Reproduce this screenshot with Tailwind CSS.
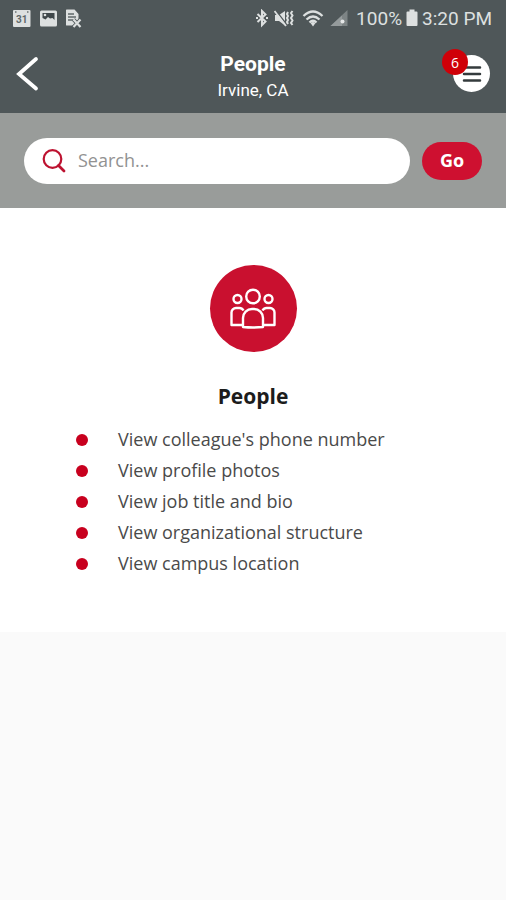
<!DOCTYPE html>
<html lang="en">
<head>
<meta charset="utf-8">
<meta name="viewport" content="width=device-width, initial-scale=1">
<title>People</title>
<script src="https://cdn.jsdelivr.net/npm/@tailwindcss/browser@4"></script>
</head>
<body class="min-h-screen bg-[#fafafa] font-['Open_Sans',sans-serif]">
<header class="bg-[#4f5759] font-[Roboto,sans-serif] text-white">
  <div class="flex h-[38px] items-center justify-between pl-3 pr-3.5 text-[19px] text-[#dde0e0]">
    <div class="flex items-center gap-2">
      <svg class="h-5 w-5" viewBox="0 0 20 20" aria-hidden="true">
        <rect x="1" y="1" width="17.500" height="17" rx="1" fill="#dde0e0"/>
        <path d="M3 3h1.500M15 3h1.500" stroke="#6b7273" stroke-width="1.500"/>
        <text x="9.700" y="14" font-size="10" font-weight="700" text-anchor="middle" fill="#60686a">31</text>
      </svg>
      <svg class="h-5 w-4.5" viewBox="0 0 18 20" aria-hidden="true">
        <rect x="0" y="1.500" width="17" height="16" rx="1.500" fill="#dde0e0"/>
        <path d="M2.500 4h12v7l-2-2-2.500.5-2-1.500L5.500 10.500 2.500 9z" fill="#3f474a"/>
        <circle cx="5" cy="6" r="1.300" fill="#dde0e0"/>
      </svg>
      <svg class="h-5 w-4.5" viewBox="0 0 18 20" aria-hidden="true">
        <path d="M1 .5h7.500L12.500 5v11.500H1a1.500 1.500 0 0 1-1.500-1.500V2A1.500 1.500 0 0 1 1 .5z" fill="#dde0e0"/>
        <path d="M2 5h6M2 8h8M2 11h5" stroke="#60686a" stroke-width="1.400"/>
        <path d="M7.500 10.500l7 7.500M14.500 10.500l-7 7.500" stroke="#4f5759" stroke-width="4"/>
        <path d="M7.500 10.500l7 7.500M14.500 10.500l-7 7.500" stroke="#dde0e0" stroke-width="2.200"/>
      </svg>
    </div>
    <div class="flex items-center">
      <svg class="mr-1.5 h-5 w-3" viewBox="0 0 12 20" fill="none" stroke="#dde0e0" stroke-width="2" aria-hidden="true">
        <path d="M1.500 5l8 7.500L6 16V2l3.500 3.500-8 7.500"/>
        <path d="M0 9h2M10 9h2"/>
      </svg>
      <svg class="mr-2 h-5 w-5" viewBox="0 0 20 20" aria-hidden="true">
        <path d="M1 6h4l6-4v14.500L5 12H1z" fill="#dde0e0"/>
        <path d="M1.500 1L13 16" stroke="#4f5759" stroke-width="1.400"/>
        <path d="M.5 2L12 17" stroke="#dde0e0" stroke-width="1.800"/>
        <path d="M14 3l-1 2 1 2-1 2 1 2-1 2 1 2M18.500 2L17 4l1.500 2.500L17 9l1.500 2.500L17 14l1.500 2" fill="none" stroke="#dde0e0" stroke-width="2"/>
      </svg>
      <svg class="mr-1.5 h-5 w-5.5" viewBox="0 0 22 20" fill="none" stroke="#dde0e0" stroke-width="2.300" aria-hidden="true">
        <path d="M1.500 7Q11 -2 20.500 7M4.500 10.500Q11 4.500 17.500 10.500M7.500 13.500Q11 10 14.500 13.500"/>
        <path d="M8.500 14L11 17.500l2.500-3.500Q11 12 8.500 14z" fill="#dde0e0" stroke="none"/>
      </svg>
      <svg class="mr-2 h-5 w-4.5" viewBox="0 0 18 20" aria-hidden="true">
        <path d="M17.500 1v16H.5z" fill="#7d8485"/>
        <path d="M12 6.500V17H.5z" fill="#959b9c"/>
        <circle cx="12.500" cy="12.500" r="2" fill="#e5e7e7"/>
      </svg>
      <span>100%</span>
      <svg class="ml-1 mr-1 h-5 w-3" viewBox="0 0 12 20" aria-hidden="true">
        <path d="M3.500 .5h5v2h2a1 1 0 0 1 1 1V16a1 1 0 0 1-1 1h-9a1 1 0 0 1-1-1V3.500a1 1 0 0 1 1-1h2z" fill="#dde0e0"/>
      </svg>
      <span>3:20 PM</span>
    </div>
  </div>
  <div class="flex h-[75px] items-center justify-between pb-1 pl-4 pr-4">
    <button class="flex w-12" aria-label="Back">
      <svg class="h-9 w-6" viewBox="0 0 24 36" fill="none" stroke="#fff" stroke-width="3.800" stroke-linecap="round" aria-hidden="true"><path d="M20 3L3 18l17 14.500"/></svg>
    </button>
    <div class="pt-1 text-center">
      <h1 class="text-[21px] leading-7 font-bold">People</h1>
      <p class="text-[17px] leading-6">Irvine, CA</p>
    </div>
    <button class="relative flex w-12 justify-end" aria-label="Menu, 6 notifications">
      <span class="flex size-[37px] items-center justify-center rounded-full bg-white">
        <svg class="h-5 w-5" viewBox="0 0 20 20" stroke="#343b3d" stroke-width="2.500" stroke-linecap="round" aria-hidden="true"><path d="M2 3.500h16M2 10h16M2 16.500h16"/></svg>
      </span>
      <span class="absolute -top-1.5 left-0 flex size-[26px] items-center justify-center rounded-full bg-[#cf0008] font-['Open_Sans',sans-serif] text-[14px] text-white">6</span>
    </button>
  </div>
</header>
<form class="flex h-[95px] items-center gap-3 bg-[#999c9a] px-6" onsubmit="return false">
  <label class="flex h-[46px] min-w-0 flex-1 items-center gap-3 rounded-full bg-white pl-[18px] pr-4">
    <svg class="h-6 w-6 shrink-0" viewBox="0 0 24 24" fill="none" stroke="#bd1230" aria-hidden="true"><circle cx="10.500" cy="10" r="8.800" stroke-width="2.200"/><path d="M16.500 16.500l5.500 5.500" stroke-width="2.800" stroke-linecap="round"/></svg>
    <input type="text" aria-label="Search" placeholder="Search..." class="min-w-0 flex-1 text-[18px] text-[#444] outline-none placeholder:text-[#929292]">
  </label>
  <button class="h-[38px] w-[60px] rounded-full bg-[#ce1030] text-[18px] font-bold text-white">Go</button>
</form>
<main class="flex flex-col items-center bg-white pt-[57px] pb-[53px]">
  <div class="flex size-[87px] items-center justify-center rounded-full bg-[#c9102f]">
    <svg class="h-12 w-12" viewBox="0 0 48 48" fill="none" stroke="#fff" stroke-width="2.400" stroke-linejoin="round" aria-hidden="true">
      <circle cx="24" cy="11.500" r="6.800"/>
      <circle cx="8.500" cy="14" r="4"/>
      <circle cx="39.500" cy="14" r="4"/>
      <path d="M14 42V33a9 9 0 0 1 9-9h2a9 9 0 0 1 9 9v9q-10 1-20 0z"/>
      <path d="M14 40H2.500V27.500a4.500 4.500 0 0 1 4.500-4.500h3.500Q13 23 14.500 25.500M34 40h11.500V27.500a4.500 4.500 0 0 0-4.500-4.500h-3.500Q35 23 33.500 25.500"/>
    </svg>
  </div>
  <h2 class="mt-7 text-[21px] leading-8 font-bold text-[#1c1c1c]">People</h2>
  <ul class="mt-3 w-full pl-[76px] text-[18px] leading-[31px] text-[#4a4a4a]">
    <li class="flex items-center gap-[30px]"><span class="size-3 rounded-full bg-[#c8001e]"></span>View colleague's phone number</li>
    <li class="flex items-center gap-[30px]"><span class="size-3 rounded-full bg-[#c8001e]"></span>View profile photos</li>
    <li class="flex items-center gap-[30px]"><span class="size-3 rounded-full bg-[#c8001e]"></span>View job title and bio</li>
    <li class="flex items-center gap-[30px]"><span class="size-3 rounded-full bg-[#c8001e]"></span>View organizational structure</li>
    <li class="flex items-center gap-[30px]"><span class="size-3 rounded-full bg-[#c8001e]"></span>View campus location</li>
  </ul>
</main>
</body>
</html>
